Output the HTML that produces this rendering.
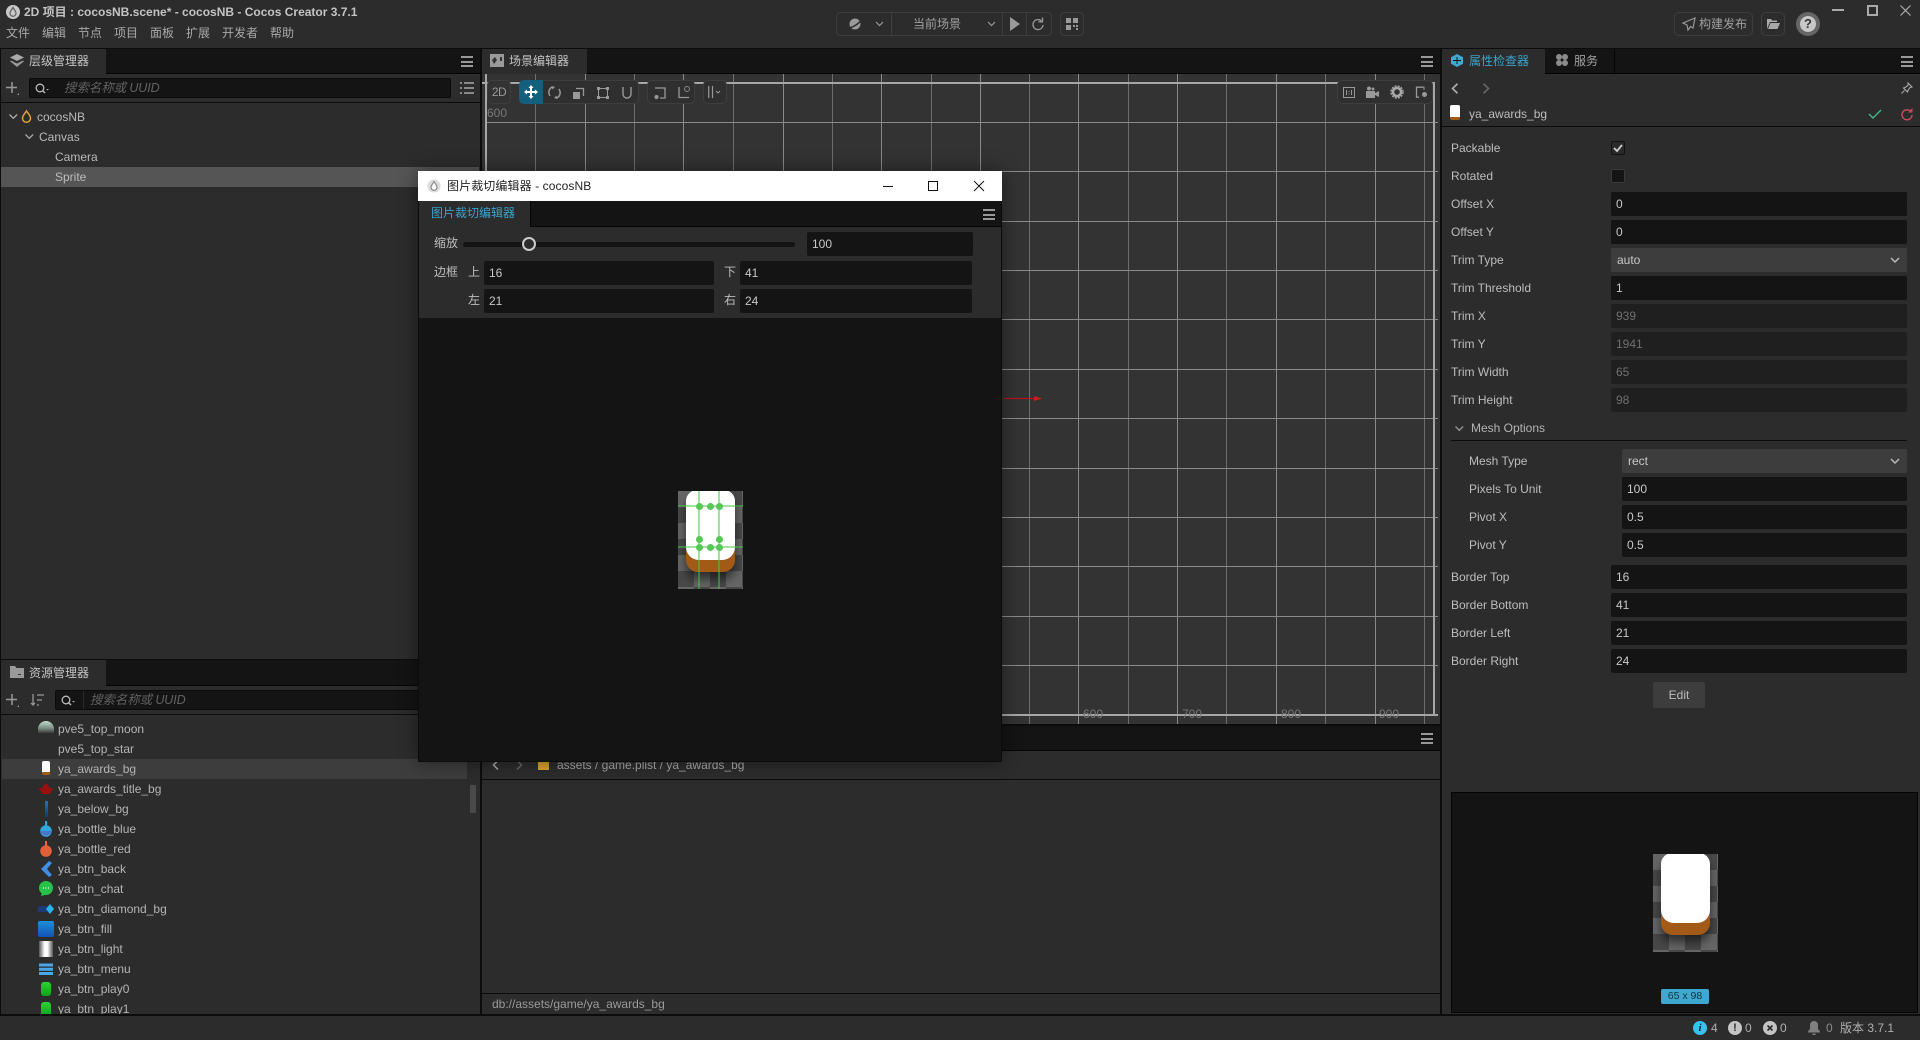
<!DOCTYPE html>
<html><head><meta charset="utf-8"><title>Cocos Creator</title>
<style>
*{box-sizing:border-box}
html,body{margin:0;padding:0;background:#0c0c0c;width:1920px;height:1040px;overflow:hidden}
body{position:relative;font:12px/16px "Liberation Sans","Noto Sans CJK SC",sans-serif;color:#bdbdbd}
.a,.t,.i{position:absolute}
.t{white-space:nowrap;line-height:16px}
.p{position:absolute;background:#2c2c2c}
.bar{position:absolute;background:#141414}
.tab{position:absolute;background:#2c2c2c}
.inp{position:absolute;background:#141414;border-radius:2px;height:24px;width:296px;left:1611px;line-height:24px;padding-left:5px;color:#c8c8c8}
.dis{background:#1f1f1f;color:#707070}
.sel{background:#3d3d3d;padding-left:6px}
.sel svg{position:absolute;right:7px;top:9px}
.lbl{left:1451px;color:#bdbdbd}
.box{position:absolute;border:1px solid #3e3e3e;border-radius:5px;background:#2c2c2c}
svg{position:absolute;overflow:visible}
.r{left:58px;color:#b4b4b4}
.ham{position:absolute;width:12px;height:11px;border-top:2px solid #999;border-bottom:2px solid #999}
.ham:after{content:"";position:absolute;left:0;right:0;top:2.5px;height:2px;background:#999}
.chk{background:#666 repeating-conic-gradient(#484848 0 25%,#666 0 50%) 0 0/32px 32px;overflow:hidden;width:65px;height:98px;position:absolute}
.spr{position:absolute;left:8px;top:0;width:49px;height:81px;background:#a25a16;border-radius:11px 11px 12px 12px;box-shadow:0 7px 10px rgba(0,0,0,.55)}
.spr:after{content:"";position:absolute;left:0;top:-1px;width:49px;height:70px;background:#fff;border-radius:11px 11px 13px 13px}
.dot{position:absolute;width:7px;height:7px;border-radius:50%;background:#55c855}
</style></head>
<body>

<!-- title bar -->
<div class="p" style="left:0;top:0;width:1920px;height:48px"></div>
<svg style="left:6px;top:5px" width="14" height="14" viewBox="0 0 14 14"><circle cx="7" cy="7" r="7" fill="#c9c9c9"/><path d="M7 2.5C5.5 5 4 6.5 4 8.300a3 3 0 0 0 6 0C10 6.500 8.500 5 7 2.500z" fill="none" stroke="#666" stroke-width="1.300"/></svg>
<div class="t" style="left:24px;top:4px;font-size:12px;font-weight:bold;color:#c4c4c4">2D 项目 : cocosNB.scene* - cocosNB - Cocos Creator 3.7.1</div>
<div class="t" style="left:6px;top:25px;color:#a8a8a8">文件</div>
<div class="t" style="left:42px;top:25px;color:#a8a8a8">编辑</div>
<div class="t" style="left:78px;top:25px;color:#a8a8a8">节点</div>
<div class="t" style="left:114px;top:25px;color:#a8a8a8">项目</div>
<div class="t" style="left:150px;top:25px;color:#a8a8a8">面板</div>
<div class="t" style="left:186px;top:25px;color:#a8a8a8">扩展</div>
<div class="t" style="left:222px;top:25px;color:#a8a8a8">开发者</div>
<div class="t" style="left:270px;top:25px;color:#a8a8a8">帮助</div>

<!-- center toolbar -->
<div class="box" style="left:836px;top:12px;width:216px;height:24px"></div>
<div class="a" style="left:891px;top:13px;width:1px;height:22px;background:#3e3e3e"></div>
<div class="a" style="left:1002px;top:13px;width:1px;height:22px;background:#3e3e3e"></div>
<div class="a" style="left:1026px;top:13px;width:1px;height:22px;background:#3e3e3e"></div>
<svg style="left:847px;top:17px" width="16" height="14" viewBox="0 0 16 14"><circle cx="8" cy="7" r="5.500" fill="#9a9a9a"/><path d="M1 11C5 11 12 7 15 2" fill="none" stroke="#2c2c2c" stroke-width="1.500"/></svg>
<svg style="left:875px;top:21px" width="9" height="6"><path d="M1 1l3.500 3.500L8 1" fill="none" stroke="#999" stroke-width="1.200"/></svg>
<div class="t" style="left:913px;top:16px;color:#a0a0a0">当前场景</div>
<svg style="left:987px;top:21px" width="9" height="6"><path d="M1 1l3.500 3.500L8 1" fill="none" stroke="#999" stroke-width="1.200"/></svg>
<svg style="left:1010px;top:17px" width="12" height="14"><path d="M0 0L10 7L0 14z" fill="#9a9a9a"/></svg>
<svg style="left:1032px;top:17px" width="12" height="14" viewBox="0 0 12 14"><path d="M9.500 4A5 5 0 1 0 11 8" fill="none" stroke="#999" stroke-width="1.300"/><path d="M10.500 .5V4.800H6.500" fill="none" stroke="#999" stroke-width="1.300"/></svg>
<div class="box" style="left:1060px;top:12px;width:24px;height:24px"></div>
<svg style="left:1066px;top:18px" width="12" height="12"><path d="M0 0h5v5H0zM7 0h5v5H7zM0 7h5v5H0z" fill="#999"/><path d="M7 7h2v2H7zM10 10h2v2h-2zM10 7h2v2h-2z" fill="#999"/></svg>

<!-- top right -->
<div class="box" style="left:1674px;top:12px;width:79px;height:24px"></div>
<svg style="left:1682px;top:17px" width="14" height="14" viewBox="0 0 14 14"><path d="M13 1L1 6l4 2 1 5 2.500-3.500L11 11z" fill="none" stroke="#999" stroke-width="1.200"/></svg>
<div class="t" style="left:1699px;top:16px;color:#a0a0a0;font-size:12px">构建发布</div>
<div class="box" style="left:1761px;top:12px;width:24px;height:24px"></div>
<svg style="left:1767px;top:19px" width="13" height="10" viewBox="0 0 13 10"><path d="M0 10V0h4l1 1.500h5V3H3L0 10zM3.500 4H13l-2.500 6H1z" fill="#a8a8a8"/></svg>
<div class="a" style="left:1796px;top:12px;width:24px;height:24px;border-radius:50%;background:#666"></div>
<div class="a" style="left:1800px;top:16px;width:16px;height:16px;border-radius:50%;background:#c8c8c8"></div>
<div class="t" style="left:1800px;top:16px;width:16px;text-align:center;font-weight:bold;font-size:13px;color:#333">?</div>
<div class="a" style="left:1832px;top:9px;width:12px;height:2px;background:#aaa"></div>
<div class="a" style="left:1867px;top:5px;width:11px;height:11px;border:2px solid #aaa"></div>
<svg style="left:1900px;top:5px" width="11" height="11"><path d="M.5.5l10 10M10.500.5l-10 10" stroke="#aaa" stroke-width="1.200"/></svg>

<!-- hierarchy panel -->
<div class="p" style="left:1px;top:49px;width:479px;height:610px"></div>
<div class="bar" style="left:1px;top:49px;width:479px;height:25px;border-bottom:1px solid #050505"></div>
<div class="tab" style="left:1px;top:49px;width:105px;height:25px"></div>
<svg style="left:10px;top:54px" width="14" height="13" viewBox="0 0 14 13"><path d="M7 0l7 3.500L7 7 0 3.500z" fill="#aaa"/><path d="M1 6.500L7 9.500l6-3 1 .7L7 13 0 7.200z" fill="#999"/></svg>
<div class="t" style="left:29px;top:53px;color:#c4c4c4;font-size:12px">层级管理器</div>
<div class="ham" style="left:461px;top:56px"></div>
<div class="a" style="left:1px;top:102px;width:479px;height:1px;background:#0c0c0c"></div>
<svg style="left:6px;top:82px" width="13" height="13"><path d="M6 0v11M0 5.500h11" stroke="#999" stroke-width="1.500"/><path d="M13 11v2h-2z" fill="#999"/></svg>
<div class="a" style="left:29px;top:78px;width:422px;height:20px;background:#141414;border-radius:2px;border:1px solid #0a0a0a"></div>
<svg style="left:35px;top:83px" width="15" height="11"><circle cx="5" cy="5" r="3.800" fill="none" stroke="#bbb" stroke-width="1.300"/><path d="M8 8l2 2" stroke="#bbb" stroke-width="1.500"/><path d="M11 6h3l-1.500 1.500z" fill="#aaa"/></svg>
<div class="t" style="left:64px;top:80px;font-style:italic;color:#626262;font-size:12.500px;letter-spacing:-.1px">搜索名称或 UUID</div>
<svg style="left:460px;top:82px" width="14" height="12"><path d="M0 1h2M0 6h2M0 11h2M4 1h10M4 6h10M4 11h10" stroke="#aaa" stroke-width="1.500"/></svg>

<svg style="left:9px;top:114px" width="9" height="6"><path d="M.5.5l3.800 3.800L8.100.5" fill="none" stroke="#aaa" stroke-width="1.300"/></svg>
<svg style="left:21px;top:110px" width="11" height="13" viewBox="0 0 11 13"><path d="M5.500 1C4 3.500 1.500 5.500 1.500 8.300a4 4 0 0 0 8 0C9.500 5.500 7 3.500 5.500 1z" fill="none" stroke="#e5a33a" stroke-width="1.500"/></svg>
<div class="t" style="left:37px;top:109px;color:#b8b8b8">cocosNB</div>
<svg style="left:25px;top:134px" width="9" height="6"><path d="M.5.500l3.800 3.800L8.100.500" fill="none" stroke="#aaa" stroke-width="1.300"/></svg>
<div class="t" style="left:39px;top:129px;color:#b8b8b8">Canvas</div>
<div class="t" style="left:55px;top:149px;color:#b8b8b8">Camera</div>
<div class="a" style="left:1px;top:167px;width:478px;height:20px;background:#555"></div>
<div class="t" style="left:55px;top:169px;color:#bdbdbd">Sprite</div>

<!-- assets panel -->
<div class="p" style="left:1px;top:660px;width:479px;height:354px"></div>
<div class="bar" style="left:1px;top:660px;width:479px;height:26px;border-bottom:1px solid #050505"></div>
<div class="tab" style="left:1px;top:660px;width:105px;height:26px"></div>
<svg style="left:10px;top:666px" width="14" height="12"><path d="M0 0h5l1.500 2H14v10H0z" fill="#9a9a9a"/><path d="M8 8h3v1H8z" fill="#333"/></svg>
<div class="t" style="left:29px;top:665px;color:#c4c4c4;font-size:12px">资源管理器</div>
<div class="a" style="left:1px;top:714px;width:479px;height:1px;background:#0c0c0c"></div>
<svg style="left:6px;top:694px" width="13" height="13"><path d="M6 0v11M0 5.500h11" stroke="#999" stroke-width="1.500"/><path d="M13 11v2h-2z" fill="#999"/></svg>
<svg style="left:30px;top:694px" width="15" height="13"><path d="M3 0v11M1 9l2 2 2-2M7 1h7M7 6h5M7 11h2" fill="none" stroke="#999" stroke-width="1.300"/></svg>
<div class="a" style="left:55px;top:690px;width:410px;height:20px;background:#141414;border:1px solid #0a0a0a;border-radius:2px"></div>
<div class="a" style="left:83px;top:691px;width:1px;height:18px;background:#2a2a2a"></div>
<svg style="left:61px;top:695px" width="15" height="11"><circle cx="5" cy="5" r="3.800" fill="none" stroke="#bbb" stroke-width="1.300"/><path d="M8 8l2 2" stroke="#bbb" stroke-width="1.500"/><path d="M11 6h3l-1.500 1.500z" fill="#aaa"/></svg>
<div class="t" style="left:90px;top:692px;font-style:italic;color:#626262;font-size:12.500px;letter-spacing:-.1px">搜索名称或 UUID</div>

<div class="a" style="left:2px;top:759px;width:465px;height:20px;background:#3d3d3d"></div>
<div class="a" style="left:470px;top:785px;width:6px;height:28px;background:#4a4a4a;border-radius:1px"></div>

<div class="a" style="left:0;top:715px;width:480px;height:299px;overflow:hidden">
<div class="t r" style="top:6px">pve5_top_moon</div>
<div class="t r" style="top:26px">pve5_top_star</div>
<div class="t r" style="top:46px">ya_awards_bg</div>
<div class="t r" style="top:66px">ya_awards_title_bg</div>
<div class="t r" style="top:86px">ya_below_bg</div>
<div class="t r" style="top:106px">ya_bottle_blue</div>
<div class="t r" style="top:126px">ya_bottle_red</div>
<div class="t r" style="top:146px">ya_btn_back</div>
<div class="t r" style="top:166px">ya_btn_chat</div>
<div class="t r" style="top:186px">ya_btn_diamond_bg</div>
<div class="t r" style="top:206px">ya_btn_fill</div>
<div class="t r" style="top:226px">ya_btn_light</div>
<div class="t r" style="top:246px">ya_btn_menu</div>
<div class="t r" style="top:266px">ya_btn_play0</div>
<div class="t r" style="top:286px">ya_btn_play1</div>

<div class="a" style="left:38px;top:6px;width:16px;height:12px;border-radius:8px 8px 0 0;background:linear-gradient(#c2dccd,#7c8f85 60%,#3a3a3a)"></div>
<div class="a" style="left:42px;top:46px;width:8px;height:14px;border-radius:2px;background:linear-gradient(#fff 80%,#a25a16 80%)"></div>
<svg style="left:38px;top:68px" width="16" height="11" viewBox="0 0 16 11"><path d="M0 6l4-1 2-3 2-2 2 2 2 3 4 1-3 2-1 3H4L3 8z" fill="#9a0f0f"/></svg>
<div class="a" style="left:45px;top:86px;width:3px;height:16px;background:linear-gradient(#2a6fc0,#123a70)"></div>
<svg style="left:40px;top:106px" width="12" height="16"><path d="M5 0h2v5H5z" fill="#2fa8e0"/><circle cx="6" cy="10" r="5.800" fill="#2fa8e0"/><path d="M.3 10a5.800 5.800 0 0 0 11.400 0z" fill="#4a74c8"/></svg>
<svg style="left:40px;top:126px" width="12" height="16"><path d="M5 0h2v5H5z" fill="#e66a3c"/><circle cx="6" cy="10" r="5.800" fill="#e0603a"/></svg>
<svg style="left:41px;top:146px" width="11" height="16"><path d="M8 0l3 2-5 6 5 6-3 2L0 8z" fill="#3f8fe5"/></svg>
<svg style="left:39px;top:166px" width="14" height="15"><circle cx="7" cy="7" r="7" fill="#27c24a"/><path d="M3 12l-1 3 4-1z" fill="#27c24a"/><path d="M4 7h1M6.500 7h1M9 7h1" stroke="#dfd" stroke-width="1.300"/></svg>
<svg style="left:38px;top:189px" width="16" height="10"><path d="M0 2h11v6H0z" fill="#1c3a78"/><path d="M12 0l4 5-4 5-4-5z" fill="#29b3e8"/></svg>
<div class="a" style="left:38px;top:206px;width:16px;height:16px;border-radius:2px;background:linear-gradient(#1c8fd8,#1550b8)"></div>
<div class="a" style="left:39px;top:226px;width:14px;height:16px;background:linear-gradient(90deg,#555,#fff 40%,#fff 60%,#555)"></div>
<svg style="left:39px;top:247px" width="14" height="14"><path d="M0 1.500h14v3H0zM0 5.800h14v3H0zM0 10h14v3H0z" fill="#4aa6ea"/></svg>
<div class="a" style="left:41px;top:267px;width:10px;height:14px;border-radius:3px;background:linear-gradient(#2ed134,#14a01e)"></div>
<div class="a" style="left:41px;top:287px;width:10px;height:14px;border-radius:3px;background:linear-gradient(#2ed134,#14a01e)"></div>
</div>

<!-- scene panel -->
<div class="p" style="left:482px;top:49px;width:958px;height:675px;background:#333"></div>
<svg style="left:482px;top:74px" width="958" height="650" viewBox="482 74 958 650">
<g stroke="#6e6e6e" stroke-width="1" fill="none">
<path d="M535.500 74v650M634.500 74v650M733.500 74v650M832.500 74v650M931.500 74v650M1029.500 74v650M1128.500 74v650M1226.500 74v650M1325.500 74v650M1424.500 74v650"/>
</g>
<g stroke="#8a8a8a" stroke-width="1" fill="none">
<path d="M585.500 74v650M683.500 74v650M783.500 74v650M881.500 74v650M980.500 74v650M1078.500 74v650M1177.500 74v650M1276.500 74v650M1375.500 74v650"/>
<path d="M486 122.500h952M486 171.500h952M486 221.500h952M486 270.500h952M486 319.500h952M486 369.500h952M486 418.500h952M486 468.500h952M486 517.500h952M486 566.500h952M486 616.500h952M486 665.500h952"/>
</g>
<g stroke="#a6a6a6" stroke-width="2" fill="none"><path d="M486 74V715H1438M482 83H1434V715"/></g>
<path d="M1004 398.500h37" stroke="#b3151a" stroke-width="1.200" fill="none"/><path d="M1034 396l8 2.500-8 2.500z" fill="#d01a1f"/>
</svg>
<div class="t" style="left:487px;top:105px;color:#777">600</div>
<div class="t" style="left:1083px;top:706px;color:#777">600</div>
<div class="t" style="left:1182px;top:706px;color:#777">700</div>
<div class="t" style="left:1281px;top:706px;color:#777">800</div>
<div class="t" style="left:1379px;top:706px;color:#777">900</div>

<div class="bar" style="left:482px;top:49px;width:958px;height:25px;border-bottom:1px solid #050505"></div>
<div class="tab" style="left:482px;top:49px;width:105px;height:25px"></div>
<svg style="left:490px;top:54px" width="14" height="13"><path d="M0 0h14v13H0z" fill="#9a9a9a"/><path d="M2 6l3-3 2 3-3 4z" fill="#333"/><path d="M10 3h2v4h-2z" fill="#333"/></svg>
<div class="t" style="left:509px;top:53px;color:#c4c4c4;font-size:12px">场景编辑器</div>
<div class="ham" style="left:1421px;top:56px"></div>

<!-- scene toolbar -->
<div class="box" style="left:487px;top:80px;width:24px;height:24px;background:#333"></div>
<div class="t" style="left:487px;top:84px;width:24px;text-align:center;color:#999;letter-spacing:-.5px">2D</div>
<div class="box" style="left:519px;top:80px;width:120px;height:24px;background:#2f2f2f"></div>
<div class="a" style="left:519px;top:80px;width:24px;height:24px;background:#135f7c;border-radius:5px 0 0 5px"></div>
<svg style="left:524px;top:85px" width="14" height="14" viewBox="0 0 14 14"><path d="M7 0l2.500 3h-5zM7 14l2.500-3h-5zM0 7l3-2.500v5zM14 7l-3-2.500v5z" fill="#fff"/><path d="M7 2v10M2 7h10" stroke="#fff" stroke-width="2"/></svg>
<svg style="left:548px;top:86px" width="13" height="13" viewBox="0 0 13 13"><path d="M2 10C-.5 6 1.500 1.500 5 1M11 3c2.500 4 .5 8.500-3 9" fill="none" stroke="#999" stroke-width="1.500"/><path d="M3.500 0L7 1 4.500 3.500zM9.500 13L6 12l2.500-2.500z" fill="#999"/></svg>
<svg style="left:573px;top:87px" width="12" height="12"><path d="M0 5h7v7H0z" fill="#999"/><path d="M3 1.500h7.500V9" fill="none" stroke="#999" stroke-width="1.300"/></svg>
<svg style="left:597px;top:87px" width="12" height="12"><path d="M1.500 1.500h9v9h-9z" fill="none" stroke="#999" stroke-width="1"/><path d="M0 0h3v3H0zM9 0h3v3H9zM0 9h3v3H0zM9 9h3v3H9z" fill="#999"/></svg>
<svg style="left:622px;top:87px" width="10" height="12"><path d="M1 0v7a4 4 0 0 0 8 0V0" fill="none" stroke="#999" stroke-width="1.400"/></svg>
<div class="box" style="left:647px;top:80px;width:48px;height:24px;background:#2f2f2f"></div>
<svg style="left:654px;top:87px" width="12" height="12"><path d="M1 1h10v10H6" fill="none" stroke="#999" stroke-width="1.300"/><circle cx="2.500" cy="10" r="2" fill="#999"/></svg>
<svg style="left:678px;top:85px" width="13" height="14"><path d="M1 2v10.500h10" fill="none" stroke="#999" stroke-width="1.300"/><circle cx="9" cy="4" r="2.500" fill="none" stroke="#888"/></svg>
<div class="box" style="left:703px;top:80px;width:24px;height:24px;background:#2f2f2f"></div>
<svg style="left:708px;top:86px" width="14" height="12"><path d="M.7 0v12M4.500 0v12" stroke="#999" stroke-width="1.200"/><path d="M8 5l2 2 2-2" fill="none" stroke="#999"/></svg>

<div class="box" style="left:1337px;top:80px;width:96px;height:24px;background:#2f2f2f"></div>
<svg style="left:1343px;top:87px" width="12" height="11"><path d="M.5.500h11v10H.5z" fill="none" stroke="#999"/><path d="M3.500 3v5M8.500 3v5M6 4v1M6 6.500v1" stroke="#999"/></svg>
<svg style="left:1366px;top:86px" width="13" height="12"><path d="M0 5h9v7H0zM9 7l4-2v6l-4-2z" fill="#999"/><circle cx="3" cy="2.500" r="2" fill="#999"/><circle cx="7" cy="3" r="1.500" fill="#999"/></svg>
<svg style="left:1391px;top:86px" width="12" height="12"><circle cx="6" cy="6" r="4" fill="none" stroke="#aaa" stroke-width="2.500"/><circle cx="6" cy="6" r="6" fill="none" stroke="#aaa" stroke-width="1.400" stroke-dasharray="2 1.200"/></svg>
<svg style="left:1415px;top:86px" width="13" height="12"><path d="M8 1.200H1.500v10H4" fill="none" stroke="#999" stroke-width="1.300"/><path d="M2 1h7v3" fill="none" stroke="#999"/><circle cx="9.500" cy="8.500" r="2.500" fill="#999"/></svg>

<!-- console panel -->
<div class="p" style="left:482px;top:726px;width:958px;height:288px"></div>
<div class="bar" style="left:482px;top:726px;width:958px;height:25px;border-bottom:1px solid #050505"></div>
<div class="ham" style="left:1421px;top:733px"></div>
<div class="a" style="left:482px;top:779px;width:958px;height:1px;background:#0c0c0c"></div>
<svg style="left:492px;top:760px" width="7" height="10"><path d="M6 .5L1.500 5 6 9.500" fill="none" stroke="#aaa" stroke-width="1.500"/></svg>
<svg style="left:516px;top:760px" width="7" height="10"><path d="M1 .5L5.500 5 1 9.500" fill="none" stroke="#666" stroke-width="1.500"/></svg>
<div class="a" style="left:538px;top:761px;width:11px;height:9px;background:#d9a32e"></div>
<div class="t" style="left:557px;top:757px;color:#a8a8a8">assets / game.plist / ya_awards_bg</div>
<div class="a" style="left:482px;top:993px;width:958px;height:1px;background:#0c0c0c"></div>
<div class="t" style="left:492px;top:996px;color:#9a9a9a">db://assets/game/ya_awards_bg</div>

<!-- inspector panel -->
<div class="p" style="left:1442px;top:49px;width:478px;height:965px"></div>
<div class="bar" style="left:1442px;top:49px;width:478px;height:25px;border-bottom:1px solid #050505"></div>
<div class="tab" style="left:1442px;top:49px;width:103px;height:25px"></div>
<div class="a" style="left:1614px;top:49px;width:1px;height:25px;background:#050505"></div>
<svg style="left:1451px;top:54px" width="12" height="13"><path d="M6 0l6 3.300v6.400L6 13 0 9.700V3.300z" fill="#3fa8d0"/><path d="M2 6.500h8M6 3v7" stroke="#141414" stroke-width="1"/></svg>
<div class="t" style="left:1469px;top:53px;color:#3ba3cc;font-size:12px">属性检查器</div>
<svg style="left:1556px;top:54px" width="12" height="12"><circle cx="3" cy="3" r="3" fill="#8c8c8c"/><circle cx="9" cy="3" r="3" fill="#8c8c8c"/><circle cx="3" cy="9" r="3" fill="#8c8c8c"/><circle cx="9" cy="9" r="3" fill="#8c8c8c"/></svg>
<div class="t" style="left:1574px;top:53px;color:#a0a0a0;font-size:12px">服务</div>
<div class="ham" style="left:1901px;top:56px"></div>
<svg style="left:1451px;top:83px" width="8" height="11"><path d="M6.500 .7L1.500 5.500l5 4.800" fill="none" stroke="#aaa" stroke-width="1.700"/></svg>
<svg style="left:1482px;top:83px" width="8" height="11"><path d="M1.500 .7l5 4.800-5 4.800" fill="none" stroke="#666" stroke-width="1.700"/></svg>
<svg style="left:1901px;top:82px" width="12" height="12" viewBox="0 0 12 12"><path d="M7 1l4 4-2 .5-2 3-.5 1.500L2.500 6 4 5.500l3-2z" fill="none" stroke="#aaa" stroke-width="1.100"/><path d="M3.500 8.500L.5 11.500" stroke="#aaa" stroke-width="1.100"/></svg>
<div class="a" style="left:1450px;top:105px;width:10px;height:15px;border-radius:2px;background:linear-gradient(#fff 80%,#a25a16 80%)"></div>
<div class="t" style="left:1469px;top:106px;color:#bdbdbd">ya_awards_bg</div>
<svg style="left:1868px;top:109px" width="14" height="10"><path d="M1 5l4 4 8-8" fill="none" stroke="#3fb98a" stroke-width="1.400"/></svg>
<svg style="left:1901px;top:108px" width="12" height="12" viewBox="0 0 12 12"><path d="M9.500 3.200A5 5 0 1 0 11 7" fill="none" stroke="#c64a5c" stroke-width="1.500"/><path d="M11.500 0v4.500H7z" fill="#c64a5c"/></svg>
<div class="a" style="left:1442px;top:126px;width:478px;height:1px;background:#0c0c0c"></div>

<div class="t lbl" style="top:140px">Packable</div>
<div class="a" style="left:1611px;top:141px;width:14px;height:14px;background:#2a2a2a;border:1px solid #111;border-radius:2px"></div>
<svg style="left:1613px;top:144px" width="10" height="8"><path d="M1 4l3 3 5-6" fill="none" stroke="#ccc" stroke-width="1.800"/></svg>
<div class="t lbl" style="top:168px">Rotated</div>
<div class="a" style="left:1611px;top:169px;width:14px;height:14px;background:#141414;border:1px solid #3a3a3a;border-radius:2px"></div>

<div class="t lbl" style="top:196px">Offset X</div><div class="inp" style="top:192px">0</div>
<div class="t lbl" style="top:224px">Offset Y</div><div class="inp" style="top:220px">0</div>
<div class="t lbl" style="top:252px">Trim Type</div><div class="inp sel" style="top:248px">auto<svg width="10" height="7"><path d="M1 1l4 4 4-4" fill="none" stroke="#bbb" stroke-width="1.500"/></svg></div>
<div class="t lbl" style="top:280px">Trim Threshold</div><div class="inp" style="top:276px">1</div>
<div class="t lbl" style="top:308px">Trim X</div><div class="inp dis" style="top:304px">939</div>
<div class="t lbl" style="top:336px">Trim Y</div><div class="inp dis" style="top:332px">1941</div>
<div class="t lbl" style="top:364px">Trim Width</div><div class="inp dis" style="top:360px">65</div>
<div class="t lbl" style="top:392px">Trim Height</div><div class="inp dis" style="top:388px">98</div>
<svg style="left:1455px;top:426px" width="9" height="6"><path d="M.5.500l3.800 3.800L8.100.500" fill="none" stroke="#999" stroke-width="1.300"/></svg>
<div class="t" style="left:1471px;top:420px;color:#b4b4b4">Mesh Options</div>
<div class="a" style="left:1451px;top:440px;width:456px;height:1px;background:#0c0c0c"></div>
<div class="t lbl" style="top:453px;left:1469px">Mesh Type</div><div class="inp sel" style="top:449px;left:1622px;width:285px">rect<svg width="10" height="7"><path d="M1 1l4 4 4-4" fill="none" stroke="#bbb" stroke-width="1.500"/></svg></div>
<div class="t lbl" style="top:481px;left:1469px">Pixels To Unit</div><div class="inp" style="top:477px;left:1622px;width:285px">100</div>
<div class="t lbl" style="top:509px;left:1469px">Pivot X</div><div class="inp" style="top:505px;left:1622px;width:285px">0.5</div>
<div class="t lbl" style="top:537px;left:1469px">Pivot Y</div><div class="inp" style="top:533px;left:1622px;width:285px">0.5</div>
<div class="t lbl" style="top:569px">Border Top</div><div class="inp" style="top:565px">16</div>
<div class="t lbl" style="top:597px">Border Bottom</div><div class="inp" style="top:593px">41</div>
<div class="t lbl" style="top:625px">Border Left</div><div class="inp" style="top:621px">21</div>
<div class="t lbl" style="top:653px">Border Right</div><div class="inp" style="top:649px">24</div>
<div class="a" style="left:1653px;top:682px;width:52px;height:26px;background:#3d3d3d;border-radius:2px;text-align:center;line-height:26px;color:#bbb">Edit</div>

<div class="a" style="left:1451px;top:792px;width:467px;height:221px;background:#141414;border:1px solid #050505"></div>
<div class="chk" style="left:1653px;top:854px"><div class="spr"></div></div>
<div class="a" style="left:1661px;top:989px;width:48px;height:15px;background:#3ea8cf;border-radius:2px;text-align:center;font-size:10.500px;line-height:15px;color:#12333f">65 x 98</div>

<!-- status bar -->
<div class="p" style="left:0;top:1016px;width:1920px;height:24px"></div>
<div class="a" style="left:1693px;top:1021px;width:14px;height:14px;border-radius:50%;background:#34c3ec;text-align:center;color:#123;font:italic bold 11px/14px 'Liberation Serif',serif">i</div>
<div class="t" style="left:1711px;top:1020px;color:#b0b0b0">4</div>
<div class="a" style="left:1728px;top:1021px;width:14px;height:14px;border-radius:50%;background:#c4c4c4;text-align:center;color:#2c2c2c;font:bold 11px/14px 'Liberation Sans',sans-serif">!</div>
<div class="t" style="left:1745px;top:1020px;color:#b0b0b0">0</div>
<div class="a" style="left:1763px;top:1021px;width:14px;height:14px;border-radius:50%;background:#c4c4c4"></div>
<svg style="left:1767px;top:1025px" width="6" height="6"><path d="M.5.500l5 5M5.500.500l-5 5" stroke="#2c2c2c" stroke-width="1.600"/></svg>
<div class="t" style="left:1780px;top:1020px;color:#b0b0b0">0</div>
<svg style="left:1808px;top:1021px" width="12" height="14" viewBox="0 0 12 14"><path d="M6 0a4 4 0 0 0-4 4v4L0 10.500v1h12v-1L10 8V4a4 4 0 0 0-4-4z" fill="#808080"/><path d="M4.500 12.500h3V14h-3z" fill="#808080"/></svg>
<div class="t" style="left:1826px;top:1020px;color:#8a8a8a">0</div>
<div class="t" style="left:1840px;top:1020px;color:#b0b0b0;font-size:12px">版本 3.7.1</div>

<!-- dialog -->
<div class="a" style="left:418px;top:171px;width:584px;height:591px;background:#141414;box-shadow:0 0 18px rgba(0,0,0,.45);border:1px solid #0c0c0c;border-top:0"></div>
<div class="a" style="left:418px;top:171px;width:584px;height:30px;background:#fff"></div>
<svg style="left:427px;top:179px" width="14" height="14" viewBox="0 0 14 14"><circle cx="7" cy="7" r="6.500" fill="#dcdcdc"/><path d="M7 2.500C5.500 5 4 6.500 4 8.300a3 3 0 0 0 6 0C10 6.500 8.500 5 7 2.500z" fill="#fff" stroke="#888" stroke-width="1.200"/></svg>
<div class="t" style="left:447px;top:178px;color:#222;letter-spacing:.1px">图片裁切编辑器 - cocosNB</div>
<div class="a" style="left:883px;top:186px;width:10px;height:1px;background:#111"></div>
<div class="a" style="left:928px;top:181px;width:10px;height:10px;border:1px solid #111"></div>
<svg style="left:974px;top:181px" width="10" height="10"><path d="M0 0l10 10M10 0L0 10" stroke="#111" stroke-width="1"/></svg>

<div class="a" style="left:419px;top:201px;width:582px;height:26px;background:#141414;border-bottom:1px solid #050505"></div>
<div class="a" style="left:419px;top:201px;width:112px;height:26px;background:#2c2c2c;border-right:1px solid #050505"></div>
<div class="t" style="left:431px;top:205px;color:#3ba3cc">图片裁切编辑器</div>
<div class="ham" style="left:983px;top:209px"></div>
<div class="a" style="left:419px;top:227px;width:582px;height:91px;background:#2c2c2c"></div>
<div class="t" style="left:434px;top:235px;color:#bdbdbd">缩放</div>
<div class="a" style="left:463px;top:242px;width:332px;height:5px;background:#141414;border-radius:3px"></div>
<div class="a" style="left:522px;top:237px;width:14px;height:14px;border-radius:50%;background:#2c2c2c;border:2px solid #ccc"></div>
<div class="inp" style="left:807px;top:232px;width:166px">100</div>
<div class="t" style="left:434px;top:264px;color:#bdbdbd">边框</div>
<div class="t" style="left:468px;top:264px;color:#bdbdbd">上</div>
<div class="inp" style="left:484px;top:261px;width:230px">16</div>
<div class="t" style="left:724px;top:264px;color:#bdbdbd">下</div>
<div class="inp" style="left:740px;top:261px;width:232px">41</div>
<div class="t" style="left:468px;top:292px;color:#bdbdbd">左</div>
<div class="inp" style="left:484px;top:289px;width:230px">21</div>
<div class="t" style="left:724px;top:292px;color:#bdbdbd">右</div>
<div class="inp" style="left:740px;top:289px;width:232px">24</div>

<div class="chk" style="left:678px;top:491px"><div class="spr"></div>
<div class="a" style="left:20px;top:0;width:2px;height:98px;background:rgba(70,200,70,.5)"></div>
<div class="a" style="left:40px;top:0;width:2px;height:98px;background:rgba(70,200,70,.5)"></div>
<div class="a" style="left:0;top:14px;width:65px;height:2px;background:rgba(70,200,70,.5)"></div>
<div class="a" style="left:0;top:55px;width:65px;height:2px;background:rgba(70,200,70,.5)"></div>
<div class="dot" style="left:18px;top:12px"></div><div class="dot" style="left:29px;top:12px"></div><div class="dot" style="left:38px;top:12px"></div>
<div class="dot" style="left:18px;top:45px"></div><div class="dot" style="left:38px;top:45px"></div>
<div class="dot" style="left:18px;top:53px"></div><div class="dot" style="left:29px;top:53px"></div><div class="dot" style="left:38px;top:53px"></div>
</div>
</body></html>
